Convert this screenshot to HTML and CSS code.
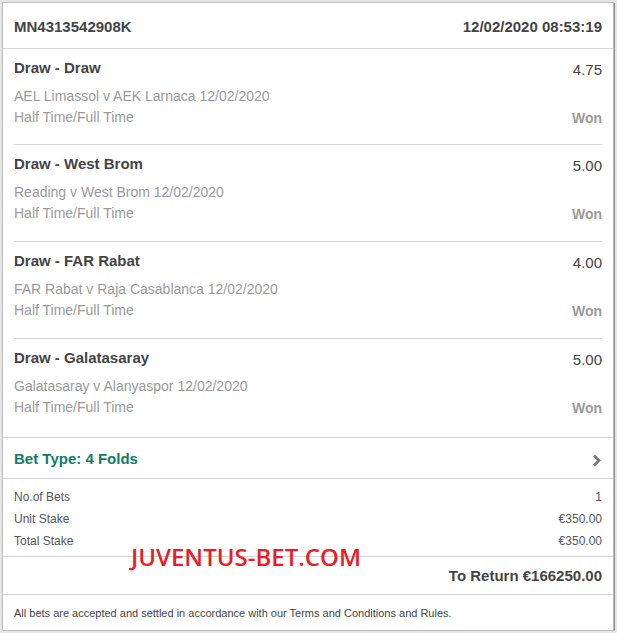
FILE: index.html
```html
<!DOCTYPE html>
<html lang="en">
<head>
  <meta charset="UTF-8" />
  <title>Bet Receipt MN4313542908K</title>
  <link rel="stylesheet" href="styles.css">
</head>
<body>

  <div class="receipt">

    <!-- HEADER -->
    <div class="receipt-head">
      <span>MN4313542908K</span>
      <span>12/02/2020 08:53:19</span>
    </div>

    <!-- SELECTIONS -->
    <div class="selection">
      <div class="sel-top"><span class="sel-name">Draw - Draw</span><span class="sel-odds">4.75</span></div>
      <div class="sel-event">AEL Limassol v AEK Larnaca 12/02/2020</div>
      <div class="sel-market"><span>Half Time/Full Time</span><span class="sel-result">Won</span></div>
    </div>
    <div class="selection">
      <div class="sel-top"><span class="sel-name">Draw - West Brom</span><span class="sel-odds">5.00</span></div>
      <div class="sel-event">Reading v West Brom 12/02/2020</div>
      <div class="sel-market"><span>Half Time/Full Time</span><span class="sel-result">Won</span></div>
    </div>
    <div class="selection">
      <div class="sel-top"><span class="sel-name">Draw - FAR Rabat</span><span class="sel-odds">4.00</span></div>
      <div class="sel-event">FAR Rabat v Raja Casablanca 12/02/2020</div>
      <div class="sel-market"><span>Half Time/Full Time</span><span class="sel-result">Won</span></div>
    </div>
    <div class="selection last">
      <div class="sel-top"><span class="sel-name">Draw - Galatasaray</span><span class="sel-odds">5.00</span></div>
      <div class="sel-event">Galatasaray v Alanyaspor 12/02/2020</div>
      <div class="sel-market"><span>Half Time/Full Time</span><span class="sel-result">Won</span></div>
    </div>

    <!-- BET TYPE -->
    <div class="bet-type">
      <span>Bet Type: 4 Folds</span>
      <svg class="chevron" width="9" height="13" viewBox="0 0 9 13" aria-hidden="true">
        <polyline points="2,1.5 7,6.5 2,11.5" fill="none" stroke="#777" stroke-width="2.6" stroke-linejoin="miter" />
      </svg>
    </div>

    <!-- SUMMARY -->
    <div class="summary">
      <div class="sum-row"><span>No.of Bets</span><span>1</span></div>
      <div class="sum-row"><span>Unit Stake</span><span>€350.00</span></div>
      <div class="sum-row"><span>Total Stake</span><span>€350.00</span></div>
    </div>

    <div class="to-return">To Return €166250.00</div>

    <!-- FOOTER -->
    <div class="receipt-foot">All bets are accepted and settled in accordance with our Terms and Conditions and Rules.</div>

    <div class="watermark">JUVENTUS-BET.COM</div>
  </div>

</body>
</html>
```

FILE: styles.css
```css
/* Reset & basics */
*, *::before, *::after {
  box-sizing: border-box;
}
body {
  margin: 0;
  background: #e6e6e6;
  font-family: 'Liberation Sans', Arial, sans-serif;
  color: #444;
}

/* CARD */
.receipt {
  position: relative;
  width: 612px;
  height: 629px;
  margin: 2px 0 0 2px;
  background: #fff;
  border: 1px solid #bdbdbd;
  box-shadow: 1px 1px 0 #8f8f8f;
  display: flex;
  flex-direction: column;
}

/* HEADER */
.receipt-head {
  height: 46px;
  padding: 1px 11px 0;
  display: flex;
  align-items: center;
  justify-content: space-between;
  font-size: 15px;
  font-weight: 700;
  color: #444;
  border-bottom: 1px solid #d6d6d6;
}

/* SELECTIONS */
.selection {
  margin: 0 11px;
  padding: 9px 0 16px;
  border-bottom: 1px solid #d6d6d6;
}
.selection + .selection {
  padding-bottom: 17px;
}
.selection.last {
  margin: 0;
  padding: 9px 11px 19px;
}
.sel-top {
  display: flex;
  justify-content: space-between;
  align-items: flex-start;
  height: 20px;
  line-height: 20px;
  margin-bottom: 8px;
}
.sel-name {
  font-size: 15px;
  font-weight: 700;
  color: #444;
}
.sel-odds {
  font-size: 15px;
  line-height: 24px;
  color: #444;
}
.sel-event,
.sel-market {
  font-size: 14px;
  line-height: 21px;
  color: #9a9a9a;
}
.sel-market {
  display: flex;
  justify-content: space-between;
  align-items: flex-start;
  height: 21px;
}
.sel-result {
  font-weight: 700;
  line-height: 23px;
}

/* BET TYPE */
.bet-type {
  height: 41px;
  padding: 0 11px;
  display: flex;
  align-items: center;
  justify-content: space-between;
  font-size: 15px;
  font-weight: 700;
  color: #0f7d62;
  border-bottom: 1px solid #d6d6d6;
}
.chevron {
  margin-top: 4px;
  margin-right: 1px;
}

/* SUMMARY */
.summary {
  padding: 7px 11px 4px;
  border-bottom: 1px solid #d6d6d6;
}
.sum-row {
  display: flex;
  justify-content: space-between;
  font-size: 12px;
  line-height: 22px;
  color: #555;
}

.to-return {
  height: 38px;
  padding: 0 11px;
  display: flex;
  align-items: center;
  justify-content: flex-end;
  font-size: 15px;
  font-weight: 700;
  color: #444;
  border-bottom: 1px solid #d6d6d6;
}

/* FOOTER */
.receipt-foot {
  flex-grow: 1;
  padding: 0 11px;
  display: flex;
  align-items: center;
  font-size: 11px;
  color: #444;
}

/* watermark over the stake rows */
.watermark {
  position: absolute;
  left: 128px;
  top: 538px;
  font-family: 'Open Sans', sans-serif;
  font-size: 24px;
  font-weight: 600;
  line-height: 32px;
  color: #ec1b24;
  pointer-events: none;
}
```
